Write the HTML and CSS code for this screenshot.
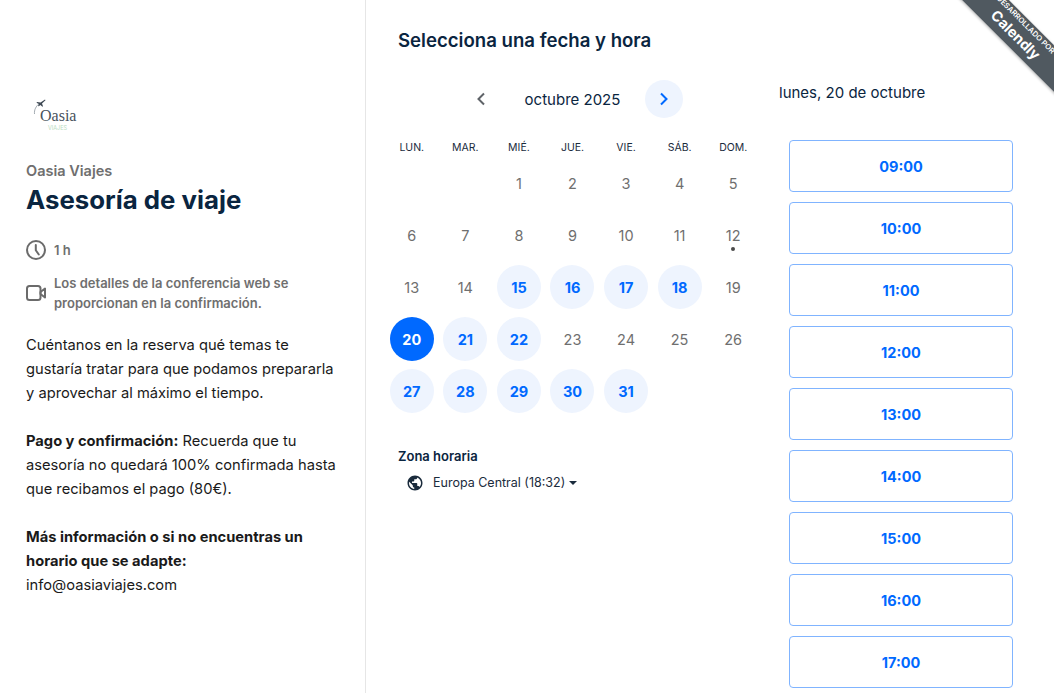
FILE: index.html
```html
<!DOCTYPE html>
<html lang="es">
<head>
  <meta charset="UTF-8" />
  <meta name="viewport" content="width=device-width, initial-scale=1.0"/>
  <title>Asesoría de viaje</title>
  <link rel="stylesheet" href="styles.css">
</head>
<body>

  <div class="page">

    <!-- Event details -->
    <aside class="details">
      <div class="logo">
        <svg class="logo-plane" width="16" height="16" viewBox="0 0 16 16"><path d="M2.500 15C2 11 4 7 7.500 4.500" fill="none" stroke="#7b8790" stroke-width="0.7"/><path d="M13 0.500 8.500 3.500 5 3 4.500 3.700 7 5l-1 2 .8.300L8.300 6l2.200 1.800.5-.5L10 4.500 13.500 1.300z" fill="#3f4a55"/></svg>
        <span class="logo-name">Oasia</span>
        <span class="logo-sub">VIAJES</span>
      </div>
      <div class="organizer">Oasia Viajes</div>
      <h1>Asesoría de viaje</h1>

      <div class="meta meta-time">
        <svg width="20" height="20" viewBox="0 0 20 20" fill="none" stroke="#6b6b6b" stroke-width="2"><circle cx="10" cy="10" r="9"/><path d="M9.800 5v5.200l3 4.300" stroke-linecap="round"/></svg>
        <span>1 h</span>
      </div>
      <div class="meta meta-video">
        <svg width="20" height="16" viewBox="0 0 20 16" fill="none" stroke="#6b6b6b" stroke-width="2" stroke-linejoin="round"><rect x="1" y="1" width="13.500" height="14" rx="2.500"/><path d="M14.500 7 19 3.500v9L14.500 9z"/></svg>
        <span>Los detalles de la conferencia web se proporcionan en la confirmación.</span>
      </div>

      <div class="description">
        <p>Cuéntanos en la reserva qué temas te gustaría tratar para que podamos prepararla y aprovechar al máximo el tiempo.</p>
        <p><strong>Pago y confirmación:</strong> Recuerda que tu asesoría no quedará 100% confirmada hasta que recibamos el pago (80€).</p>
        <p><strong>Más información o si no encuentras un horario que se adapte:</strong><br>info@oasiaviajes.com</p>
      </div>
    </aside>

    <!-- Date and time picker -->
    <main class="picker">
      <h2>Selecciona una fecha y hora</h2>

      <div class="picker-body">
        <section class="calendar">
          <div class="month-nav">
            <button class="nav-btn" type="button">
              <svg width="10" height="14" viewBox="0 0 10 14" fill="none" stroke="#5f6368" stroke-width="2"><path d="M8 1.500 2.500 7 8 12.500"/></svg>
            </button>
            <span class="month-name">octubre 2025</span>
            <button class="nav-btn nav-next" type="button">
              <svg width="10" height="14" viewBox="0 0 10 14" fill="none" stroke="#0069ff" stroke-width="2"><path d="M2 1.500 7.500 7 2 12.500"/></svg>
            </button>
          </div>

          <div class="weekdays">
            <span>LUN.</span><span>MAR.</span><span>MIÉ.</span><span>JUE.</span><span>VIE.</span><span>SÁB.</span><span>DOM.</span>
          </div>

          <div class="days">
            <span></span><span></span>
            <span class="day">1</span><span class="day">2</span><span class="day">3</span><span class="day">4</span><span class="day">5</span>
            <span class="day">6</span><span class="day">7</span><span class="day">8</span><span class="day">9</span><span class="day">10</span><span class="day">11</span><span class="day today">12</span>
            <span class="day">13</span><span class="day">14</span><span class="day open">15</span><span class="day open">16</span><span class="day open">17</span><span class="day open">18</span><span class="day">19</span>
            <span class="day selected">20</span><span class="day open">21</span><span class="day open">22</span><span class="day">23</span><span class="day">24</span><span class="day">25</span><span class="day">26</span>
            <span class="day open">27</span><span class="day open">28</span><span class="day open">29</span><span class="day open">30</span><span class="day open">31</span>
          </div>

          <div class="timezone">
            <div class="timezone-label">Zona horaria</div>
            <div class="timezone-value">
              <svg width="18" height="18" viewBox="0 0 24 24" fill="#1a2b3c"><path d="M12 2C6.480 2 2 6.480 2 12s4.480 10 10 10 10-4.480 10-10S17.520 2 12 2zm-1 17.930c-3.950-.49-7-3.850-7-7.930 0-.62.08-1.210.21-1.790L9 15v1c0 1.100.9 2 2 2v1.930zm6.900-2.540c-.26-.81-1-1.390-1.900-1.390h-1v-3c0-.55-.45-1-1-1H8v-2h2c.55 0 1-.45 1-1V7h2c1.100 0 2-.9 2-2v-.41c2.930 1.190 5 4.060 5 7.410 0 2.080-.8 3.970-2.100 5.390z"/></svg>
              <span>Europa Central (18:32)</span>
              <i class="caret"></i>
            </div>
          </div>
        </section>

        <section class="times">
          <div class="selected-date">lunes, 20 de octubre</div>
          <div class="slots">
            <button class="slot" type="button">09:00</button>
            <button class="slot" type="button">10:00</button>
            <button class="slot" type="button">11:00</button>
            <button class="slot" type="button">12:00</button>
            <button class="slot" type="button">13:00</button>
            <button class="slot" type="button">14:00</button>
            <button class="slot" type="button">15:00</button>
            <button class="slot" type="button">16:00</button>
            <button class="slot" type="button">17:00</button>
          </div>
        </section>
      </div>
    </main>
  </div>

  <!-- Corner badge -->
  <div class="ribbon-wrap">
    <div class="ribbon">
      <span class="ribbon-small">DESARROLLADO POR</span>
      <span class="ribbon-brand">Calendly</span>
    </div>
  </div>

</body>
</html>
```

FILE: styles.css
```css
:root {
  --text-color: #0a2540;
  --muted-color: #6f6f6f;
  --accent-color: #0069ff;
  --accent-soft: #eef4fe;
}

html, body {
  height: 100%;
}

body {
  margin: 0;
  padding: 0;
  overflow: hidden;
  position: relative;
  font-family: Inter, "Liberation Sans", sans-serif;
  background: #ffffff;
  color: var(--text-color);
}

.page {
  display: flex;
  height: 693px;
  overflow: hidden;
}

/* Left column */
.details {
  width: 366px;
  flex: none;
  box-sizing: border-box;
  padding: 96px 26px 0;
  border-right: 1px solid #e6e6e6;
}

.logo {
  position: relative;
  height: 41px;
  width: 60px;
  padding-left: 14px;
  box-sizing: border-box;
}

.logo-plane {
  position: absolute;
  left: 6px;
  top: 3px;
}

.logo-name {
  display: block;
  font-family: "Liberation Serif", serif;
  font-size: 16px;
  line-height: 20px;
  padding-top: 10px;
  color: #47525c;
}

.logo-sub {
  display: block;
  font-size: 5.500px;
  line-height: 5px;
  margin-left: 8px;
  color: #b9dcc0;
}

.organizer {
  margin-top: 24px;
  font-size: 14.500px;
  line-height: 20px;
  font-weight: 600;
  color: var(--muted-color);
}

h1 {
  margin: 2px 0 0;
  font-size: 25.800px;
  line-height: 34px;
  font-weight: 700;
  color: var(--text-color);
}

.meta {
  display: flex;
  align-items: center;
  gap: 8px;
  color: var(--muted-color);
  font-size: 13px;
  font-weight: 600;
}

.meta svg {
  flex: none;
}

.meta-time {
  margin-top: 23px;
}

.meta-video {
  margin-top: 13px;
  line-height: 20px;
}

.description {
  margin-top: 20px;
  font-size: 14.700px;
  line-height: 24px;
  color: #1a1a1a;
}

.description p {
  margin: 0 0 24px;
}

.description strong {
  font-weight: 700;
}

/* Picker */
.picker {
  flex: 1;
  padding: 26px 0 0 32px;
}

h2 {
  margin: 0;
  font-size: 18.600px;
  line-height: 28px;
  font-weight: 600;
  color: var(--text-color);
}

.picker-body {
  display: flex;
  margin-top: 26px;
}

.calendar {
  width: 375px;
  flex: none;
  margin-left: -13px;
}

.month-nav {
  display: flex;
  align-items: center;
  height: 38px;
  padding-left: 77px;
}

.nav-btn {
  width: 38px;
  height: 38px;
  border: none;
  border-radius: 50%;
  background: none;
  padding: 0;
  display: flex;
  align-items: center;
  justify-content: center;
}

.nav-next {
  background: var(--accent-soft);
}

.month-name {
  width: 145px;
  text-align: center;
  font-size: 15px;
  color: var(--text-color);
}

.weekdays,
.days {
  display: grid;
  grid-template-columns: repeat(7, 1fr);
  justify-items: center;
}

.weekdays {
  margin-top: 22px;
  font-size: 10.500px;
  line-height: 16px;
  color: #1a2b3c;
}

.days {
  margin-top: 1px;
  grid-auto-rows: 52px;
  align-items: center;
}

.day {
  position: relative;
  width: 44px;
  height: 44px;
  border-radius: 50%;
  display: flex;
  align-items: center;
  justify-content: center;
  font-size: 14.500px;
  color: #6f6f6f;
}

.day.open {
  background: var(--accent-soft);
  color: var(--accent-color);
  font-weight: 700;
}

.day.selected {
  background: var(--accent-color);
  color: #ffffff;
  font-weight: 700;
}

.day.today::after {
  content: "";
  position: absolute;
  left: 20px;
  bottom: 6px;
  width: 4px;
  height: 4px;
  border-radius: 50%;
  background: #4a4a4a;
}

.timezone {
  margin-top: 30px;
  margin-left: 13px;
}

.timezone-label {
  font-size: 13px;
  line-height: 18px;
  font-weight: 600;
  color: var(--text-color);
}

.timezone-value {
  display: flex;
  align-items: center;
  margin-top: 9px;
  margin-left: 8px;
  font-size: 12.500px;
  line-height: 18px;
  color: #1a2b3c;
}

.timezone-value span {
  margin-left: 9px;
}

.caret {
  margin-left: 4px;
  border-left: 4px solid transparent;
  border-right: 4px solid transparent;
  border-top: 4px solid #1a2b3c;
}

.times {
  flex: none;
  margin-left: 19px;
}

.selected-date {
  font-size: 15px;
  line-height: 26px;
  color: var(--text-color);
}

.slots {
  display: flex;
  flex-direction: column;
  gap: 10px;
  margin: 34px 0 0 10px;
}

.slot {
  width: 224px;
  height: 52px;
  flex: none;
  background: #ffffff;
  border: 1px solid #80b4ff;
  border-radius: 4px;
  font-family: inherit;
  font-size: 14.500px;
  font-weight: 700;
  color: var(--accent-color);
}

/* Corner badge */
.ribbon-wrap {
  position: absolute;
  top: 0;
  right: 0;
  width: 110px;
  height: 110px;
  overflow: hidden;
}

.ribbon {
  position: absolute;
  top: 16px;
  left: -26px;
  width: 200px;
  height: 33px;
  transform: rotate(45deg);
  background: #505960;
  color: #ffffff;
  text-align: center;
  box-shadow: 0 1px 3px rgba(0, 0, 0, 0.3);
}

.ribbon-small {
  display: block;
  font-size: 7.500px;
  line-height: 10px;
  padding-top: 1px;
  font-weight: 600;
}

.ribbon-brand {
  display: block;
  font-size: 14.500px;
  line-height: 18px;
  font-weight: 700;
}
```
